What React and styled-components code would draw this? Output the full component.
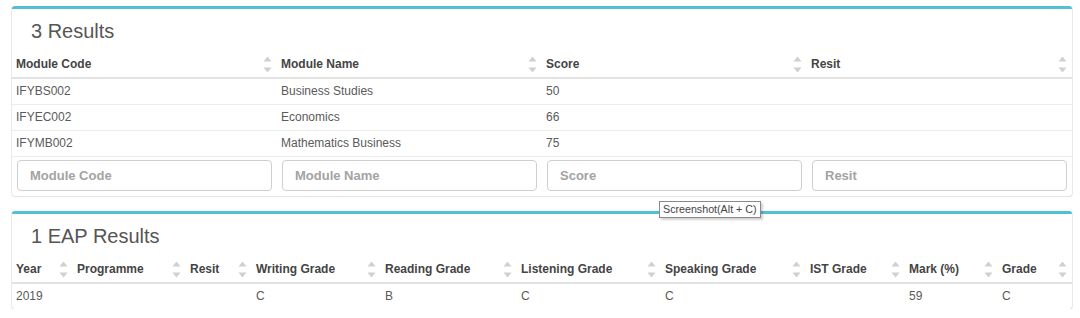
import React from "react";
import styled, { createGlobalStyle } from "styled-components";

const GlobalStyle = createGlobalStyle`
  html, body { margin: 0; padding: 0; background: #fff; }
  body { font-family: "Liberation Sans", Arial, Helvetica, sans-serif; }
  * { box-sizing: border-box; }
`;

const Page = styled.div`
  position: relative;
  padding: 6px 8px 0 12px;
`;

const Box = styled.section`
  background: #fff;
  border-top: 3px solid #4fc0d6;
  border-radius: 3px;
  box-shadow: 0 1px 1px rgba(0, 0, 0, 0.12), 1px 0 0 #ececec, -1px 0 0 #ececec;
  margin-bottom: ${(p) => p.$gap || 0}px;
`;

const Title = styled.h3`
  margin: 0;
  padding: 12px 19px 8px;
  font-size: 20px;
  line-height: 21px;
  font-weight: 400;
  color: #555;
`;

const Table = styled.table`
  width: 100%;
  border-collapse: collapse;
  table-layout: fixed;
  font-size: 12px;
  color: #5a5a5a;
`;

const HeadCell = styled.th`
  padding: 5px 5px 3px 4px;
  border-bottom: 2px solid #e2e2e2;
  text-align: left;
  font-weight: 700;
  color: #444;
  line-height: 17px;
  white-space: nowrap;
`;

const HeadInner = styled.div`
  display: flex;
  align-items: center;
  justify-content: space-between;
`;

const Cell = styled.td`
  padding: 4px;
  border-top: 1px solid #ececec;
  line-height: 17px;
  white-space: nowrap;
`;

const FootCell = styled.th`
  padding: 3px 5px 5px;
  border-top: 1px solid #ececec;
`;

const FilterInput = styled.input`
  display: block;
  width: 100%;
  height: 31px;
  border: 1px solid #cfcfcf;
  border-radius: 4px;
  padding: 6px 12px;
  font-family: "Liberation Sans", Arial, sans-serif;
  font-size: 13px;
  font-weight: 700;
  color: #555;
  background: #fff;
  outline: none;
  &::placeholder { color: #a3a3a3; opacity: 1; }
`;

const Tooltip = styled.div`
  position: absolute;
  left: 659px;
  top: 201px;
  height: 17px;
  padding: 0 3px 0 3px;
  background: #fff;
  border: 1px solid #8a8a8a;
  box-shadow: 2px 2px 2px rgba(0, 0, 0, 0.18);
  font-family: "Liberation Sans", Arial, sans-serif;
  font-size: 10.7px;
  line-height: 15px;
  color: #444;
  white-space: nowrap;
  z-index: 5;
`;

const SortIcon = () => (
  <svg width="9" height="19" viewBox="0 0 9 19" style={{ flex: "none" }}>
    <path d="M4.5 1.5 L8.5 6.5 L0.5 6.5 Z" fill="#d0d0d0" />
    <path d="M4.5 17.5 L8.5 12.5 L0.5 12.5 Z" fill="#d0d0d0" />
  </svg>
);

const Head = ({ children }) => (
  <HeadCell>
    <HeadInner>
      <span>{children}</span>
      <SortIcon />
    </HeadInner>
  </HeadCell>
);

const results = [
  ["IFYBS002", "Business Studies", "50", ""],
  ["IFYEC002", "Economics", "66", ""],
  ["IFYMB002", "Mathematics Business", "75", ""],
];

const resultCols = ["Module Code", "Module Name", "Score", "Resit"];

const eapCols = [
  ["Year", 61],
  ["Programme", 113],
  ["Resit", 66],
  ["Writing Grade", 129],
  ["Reading Grade", 136],
  ["Listening Grade", 144],
  ["Speaking Grade", 145],
  ["IST Grade", 99],
  ["Mark (%)", 93],
  ["Grade", null],
];

const eapRows = [["2019", "", "", "C", "B", "C", "C", "", "59", "C"]];

export default function App() {
  return (
    <Page>
      <GlobalStyle />
      <Box $gap={15}>
        <Title>3 Results</Title>
        <Table>
          <thead>
            <tr>
              {resultCols.map((c) => (
                <Head key={c}>{c}</Head>
              ))}
            </tr>
          </thead>
          <tbody>
            {results.map((r) => (
              <tr key={r[0]}>
                {r.map((v, i) => (
                  <Cell key={i}>{v}</Cell>
                ))}
              </tr>
            ))}
          </tbody>
          <tfoot>
            <tr>
              {resultCols.map((c) => (
                <FootCell key={c}>
                  <FilterInput placeholder={c} />
                </FootCell>
              ))}
            </tr>
          </tfoot>
        </Table>
      </Box>
      <Box>
        <Title>1 EAP Results</Title>
        <Table>
          <colgroup>
            {eapCols.map(([c, w]) => (
              <col key={c} style={w ? { width: w } : undefined} />
            ))}
          </colgroup>
          <thead>
            <tr>
              {eapCols.map(([c]) => (
                <Head key={c}>{c}</Head>
              ))}
            </tr>
          </thead>
          <tbody>
            {eapRows.map((r, ri) => (
              <tr key={ri}>
                {r.map((v, i) => (
                  <Cell key={i}>{v}</Cell>
                ))}
              </tr>
            ))}
          </tbody>
        </Table>
      </Box>
      <Tooltip>Screenshot(Alt + C)</Tooltip>
    </Page>
  );
}
